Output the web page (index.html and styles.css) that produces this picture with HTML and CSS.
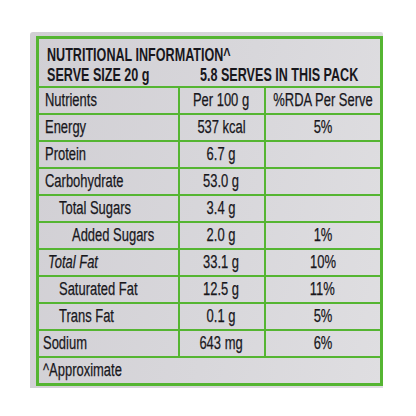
FILE: index.html
```html
<!DOCTYPE html>
<html lang="en">
<head>
    <meta charset="UTF-8">
    <meta name="viewport" content="width=device-width, initial-scale=1.0">
    <title>Nutritional Information</title>
    <link rel="stylesheet" href="styles.css">
</head>
<body>
    <div class="paper">
        <table class="facts">
            <colgroup>
                <col class="col-name">
                <col class="col-num">
                <col class="col-rda">
            </colgroup>
            <tr>
                <td colspan="3" class="heading">
                    <div class="heading-line"><span class="txt">NUTRITIONAL INFORMATION^</span></div>
                    <div class="heading-line serve">
                        <span class="txt">SERVE SIZE 20 g</span>
                        <span class="txt">5.8 SERVES IN THIS PACK</span>
                    </div>
                </td>
            </tr>
            <tr>
                <td><div class="name"><span class="txt">Nutrients</span></div></td>
                <td><div class="mid"><span class="txt">Per 100 g</span></div></td>
                <td><div class="mid"><span class="txt">%RDA Per Serve</span></div></td>
            </tr>
            <tr>
                <td><div class="name"><span class="txt">Energy</span></div></td>
                <td><div class="mid"><span class="txt">537 kcal</span></div></td>
                <td><div class="mid"><span class="txt">5%</span></div></td>
            </tr>
            <tr>
                <td><div class="name"><span class="txt">Protein</span></div></td>
                <td><div class="mid"><span class="txt">6.7 g</span></div></td>
                <td></td>
            </tr>
            <tr>
                <td><div class="name"><span class="txt">Carbohydrate</span></div></td>
                <td><div class="mid"><span class="txt">53.0 g</span></div></td>
                <td></td>
            </tr>
            <tr>
                <td><div class="name sub"><span class="txt">Total Sugars</span></div></td>
                <td><div class="mid"><span class="txt">3.4 g</span></div></td>
                <td></td>
            </tr>
            <tr>
                <td><div class="name subsub"><span class="txt">Added Sugars</span></div></td>
                <td><div class="mid"><span class="txt">2.0 g</span></div></td>
                <td><div class="mid"><span class="txt">1%</span></div></td>
            </tr>
            <tr>
                <td><div class="name fat"><span class="txt">Total Fat</span></div></td>
                <td><div class="mid"><span class="txt">33.1 g</span></div></td>
                <td><div class="mid"><span class="txt">10%</span></div></td>
            </tr>
            <tr>
                <td><div class="name sub"><span class="txt">Saturated Fat</span></div></td>
                <td><div class="mid"><span class="txt">12.5 g</span></div></td>
                <td><div class="mid"><span class="txt">11%</span></div></td>
            </tr>
            <tr>
                <td><div class="name sub"><span class="txt">Trans Fat</span></div></td>
                <td><div class="mid"><span class="txt">0.1 g</span></div></td>
                <td><div class="mid"><span class="txt">5%</span></div></td>
            </tr>
            <tr>
                <td><div class="name low"><span class="txt">Sodium</span></div></td>
                <td><div class="mid"><span class="txt">643 mg</span></div></td>
                <td><div class="mid"><span class="txt">6%</span></div></td>
            </tr>
            <tr>
                <td colspan="3"><div class="name low"><span class="txt">^Approximate</span></div></td>
            </tr>
        </table>
    </div>
</body>
</html>
```

FILE: styles.css
```css
body {
    margin: 0;
    background: #ffffff;
    font-family: "Liberation Sans", Arial, sans-serif;
    color: #18171c;
}
.paper {
    width: 353px;
    height: 356px;
    margin: 32px 0 0 30px;
    padding: 4px 3px 0 6px;
    box-sizing: border-box;
    background: linear-gradient(100deg, #d1cfd4 0%, #d8d7db 55%, #dfdee1 100%);
    border-radius: 3px 2px 0 0;
}
.facts {
    width: 344px;
    border-collapse: collapse;
    border: 3px solid #55b532;
    table-layout: fixed;
}
.col-name { width: 141px; }
.col-num { width: 86px; }
.col-rda { width: 117px; }
.facts td {
    border: 2px solid #55b532;
    height: 25px;
    padding: 0;
    overflow: visible;
}
.txt {
    display: inline-block;
    white-space: nowrap;
    font-size: 18px;
    line-height: 25px;
    -webkit-text-stroke: 0.25px #18171c;
    transform: scaleX(0.72);
    transform-origin: 0 50%;
}
.name,
.mid {
    display: flex;
    height: 25px;
}
.name {
    padding-left: 6px;
}
.name.sub {
    padding-left: 20px;
}
.name.subsub {
    padding-left: 33px;
}
.name.fat {
    padding-left: 9px;
    font-style: italic;
}
.name.low {
    padding-left: 4px;
}
.mid {
    justify-content: center;
}
.mid .txt {
    transform-origin: 50% 50%;
}
.heading {
    height: 41px !important;
    padding: 6px 0 0 8px !important;
    vertical-align: top;
}
.heading-line {
    display: flex;
    height: 20px;
}
.heading-line .txt {
    font-weight: bold;
    font-size: 18.5px;
    line-height: 20px;
    -webkit-text-stroke: 0;
    transform: scaleX(0.68);
}
.serve {
    display: grid;
    grid-template-columns: 153px 1fr;
}
```
